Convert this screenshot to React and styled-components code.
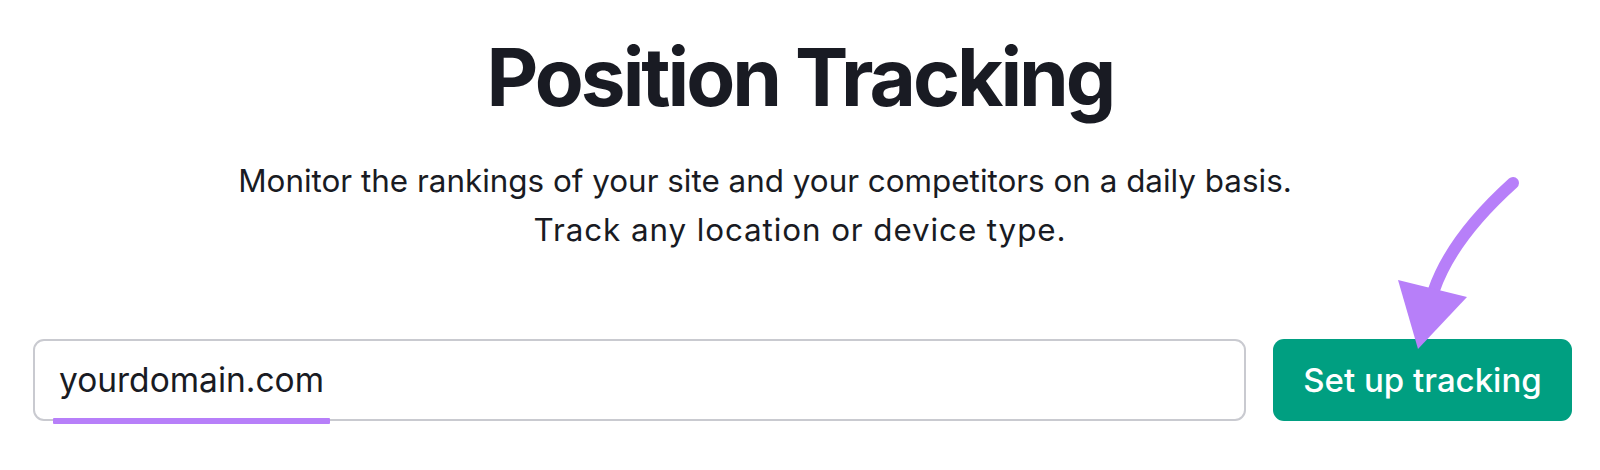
import styled, { createGlobalStyle } from 'styled-components';

const Global = createGlobalStyle`
  html, body {
    margin: 0;
    padding: 0;
    background: #ffffff;
  }
  body {
    font-family: Inter, "Noto Sans", sans-serif;
    color: #191b23;
  }
`;

const Page = styled.div`
  position: relative;
  width: 1600px;
  height: 470px;
  display: flex;
  flex-direction: column;
  align-items: center;
  overflow: hidden;
`;

const Title = styled.h1`
  margin: 27px 0 0;
  font-size: 80px;
  font-weight: 700;
  line-height: 100px;
  letter-spacing: -3px;
  color: #191b23;
`;

const Lead = styled.p`
  margin: 30px 0 0;
  font-size: 31.4px;
  font-weight: 400;
  line-height: 49px;
  text-align: center;
  color: #191b23;
`;

const LeadLine = styled.span`
  display: block;
  margin-right: ${(p) => (p.$shift ? '70px' : '0')};
  letter-spacing: ${(p) => (p.$wide ? '0.9px' : '0')};
`;

const Form = styled.div`
  align-self: stretch;
  display: flex;
  gap: 27px;
  margin-top: 84px;
  padding: 0 28px 0 33px;
`;

const Field = styled.div`
  position: relative;
  flex: 1;
  height: 82px;
  box-sizing: border-box;
  border: 2px solid #c9cad0;
  border-radius: 11px;
  display: flex;
  align-items: center;
  padding-left: 24px;
`;

const Value = styled.span`
  font-size: 33.5px;
  color: #191b23;
`;

const Underline = styled.span`
  position: absolute;
  left: 18px;
  bottom: -5px;
  width: 277px;
  height: 6px;
  border-radius: 1px;
  background: #b77ff9;
`;

const Button = styled.button`
  width: 299px;
  height: 82px;
  border: none;
  border-radius: 11px;
  background: #009f81;
  color: #ffffff;
  font-family: Inter, "Noto Sans", sans-serif;
  font-size: 33px;
  font-weight: 500;
  cursor: pointer;
`;

const Arrow = styled.svg`
  position: absolute;
  left: 0;
  top: 0;
  pointer-events: none;
`;

export default function App() {
  return (
    <Page>
      <Global />
      <Title>Position Tracking</Title>
      <Lead>
        <LeadLine $shift>
          Monitor the rankings of your site and your competitors on a daily basis.
        </LeadLine>
        <LeadLine $wide>Track any location or device type.</LeadLine>
      </Lead>
      <Form>
        <Field>
          <Value>yourdomain.com</Value>
          <Underline />
        </Field>
        <Button>Set up tracking</Button>
      </Form>
      <Arrow width="1600" height="470" viewBox="0 0 1600 470">
        <path
          d="M1513 183 Q1452 238 1434 290"
          fill="none"
          stroke="#b77ff9"
          strokeWidth="12"
          strokeLinecap="round"
        />
        <polygon points="1398,280 1467,297 1418,349" fill="#b77ff9" />
      </Arrow>
    </Page>
  );
}
